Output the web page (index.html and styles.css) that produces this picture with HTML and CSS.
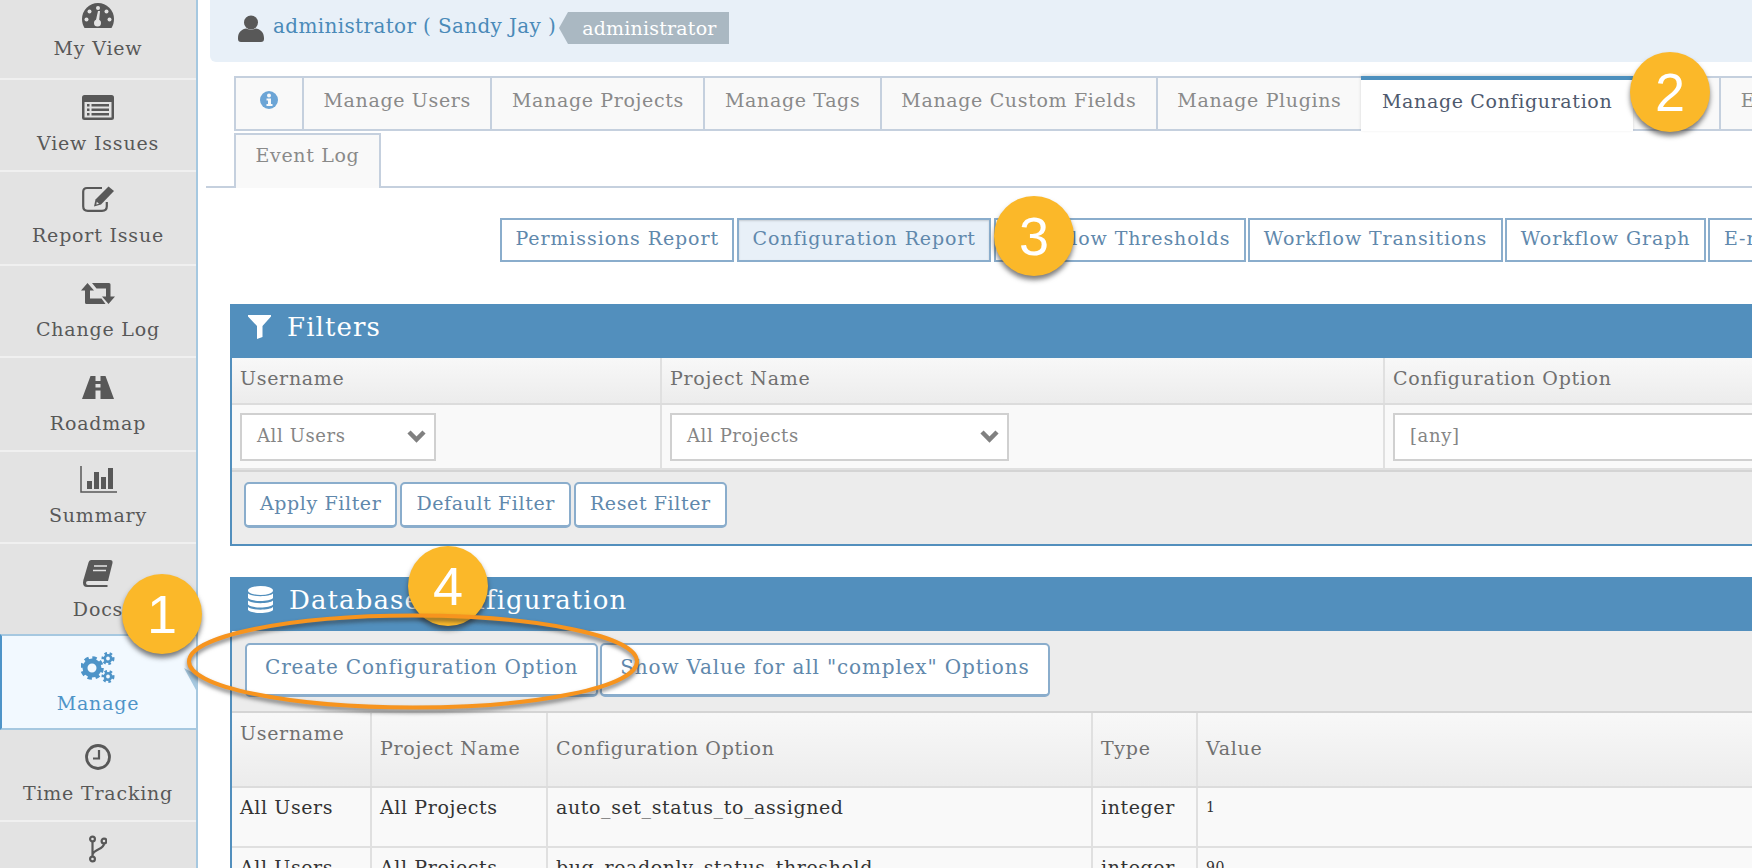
FILE: index.html
```html
<!DOCTYPE html>
<html lang="en">

<head>
    <meta charset="UTF-8" />
    <meta name="viewport" content="width=device-width, initial-scale=1.0" />
    <title>Configuration Report</title>

    <link rel="stylesheet" href="styles.css">
</head>

<body>
    <div class="page">
        <!-- SIDEBAR -->
        <nav class="sidebar">
            <a class="nav-item first">
                <span class="nav-icon">
                    <svg width="32" height="25" viewBox="0 0 32 25"><path fill="#585858" d="M16 0A16 16 0 0 0 0 16c0 3.500 1 6.500 2.500 9h27c1.500-2.500 2.500-5.500 2.500-9A16 16 0 0 0 16 0z"/><g fill="#e3e3e3"><circle cx="16" cy="5" r="2"/><circle cx="7.500" cy="8.500" r="2"/><circle cx="4.500" cy="16.500" r="2"/><circle cx="27.500" cy="16.500" r="2"/><circle cx="24.500" cy="8.500" r="2"/><circle cx="15.500" cy="20" r="3.500"/><path d="M13.500 19l2.500-11h2l-1 11z"/></g></svg>
                </span>
                <span class="nav-label">My View</span>
            </a>
            <a class="nav-item">
                <span class="nav-icon">
                    <svg width="32" height="25" viewBox="0 0 32 25"><rect width="32" height="25" rx="2.500" fill="#585858"/><rect x="2.500" y="7" width="27" height="15.500" fill="#e3e3e3"/><g fill="#585858"><rect x="5" y="9" width="2.500" height="2.500"/><rect x="5" y="13.500" width="2.500" height="2.500"/><rect x="5" y="18" width="2.500" height="2.500"/><rect x="9.500" y="9" width="17.500" height="2.500"/><rect x="9.500" y="13.500" width="17.500" height="2.500"/><rect x="9.500" y="18" width="17.500" height="2.500"/></g></svg>
                </span>
                <span class="nav-label">View Issues</span>
            </a>
            <a class="nav-item tall">
                <span class="nav-icon">
                    <svg width="32" height="26" viewBox="0 0 32 26"><path fill="none" stroke="#585858" stroke-width="2.200" d="M20 2H5Q1.200 2 1.200 5.800V20.200Q1.200 24.800 5.800 24.800H20Q24.800 24.800 24.800 20.200V16"/><path fill="#585858" d="M26.500 0.500L32 5 19 18.500 12 20.500 13.500 13.500z"/><path fill="#e3e3e3" d="M14.800 15.800l2.200 2-2.700.8z"/></svg>
                </span>
                <span class="nav-label">Report Issue</span>
            </a>
            <a class="nav-item">
                <span class="nav-icon">
                    <svg width="34" height="21" viewBox="0 0 34 21"><path fill="#585858" d="M6.500 0L13 7.500H9V15.500H20.500L24.500 21H5.500Q4 21 4 19.500V7.500H0zM11 0H28Q29.500 0 29.500 1.500V13.500H34L27.500 21 21 13.500H25V5.500H15.500z"/></svg>
                </span>
                <span class="nav-label">Change Log</span>
            </a>
            <a class="nav-item tall roomy">
                <span class="nav-icon">
                    <svg width="32" height="23" viewBox="0 0 32 23"><path fill="#585858" fill-rule="evenodd" d="M8.500 0H13.500V5H18.500V0H23.500L32 23H18.500V14.500H13.500V23H0zM13.500 8H18.500V11.500H13.500z"/></svg>
                </span>
                <span class="nav-label">Roadmap</span>
            </a>
            <a class="nav-item">
                <span class="nav-icon">
                    <svg width="37" height="27" viewBox="0 0 37 27"><path fill="none" stroke="#585858" stroke-width="1.500" d="M1 0V26H37"/><g fill="#585858"><rect x="7" y="15" width="5" height="8"/><rect x="14" y="6" width="5" height="17"/><rect x="21" y="11" width="5" height="12"/><rect x="28" y="2" width="5" height="21"/></g></svg>
                </span>
                <span class="nav-label">Summary</span>
            </a>
            <a class="nav-item roomy">
                <span class="nav-icon">
                    <svg width="30" height="27" viewBox="0 0 30 27"><path fill="#585858" d="M8 0H27Q30 0 29.500 3L25 21H5Q3 21 3 23t2 2H24.500V27H4Q0 27 0 22.500 0 20.500 1 18L5.500 2.500Q6 0 8 0z"/><path fill="none" stroke="#e3e3e3" stroke-width="1.600" d="M11 6H24M10 10.500H23"/></svg>
                </span>
                <span class="nav-label">Docs</span>
            </a>
            <a class="nav-item roomy active">
                <span class="nav-icon">
                    <svg width="34" height="31" viewBox="0 0 34 31"><g fill="none" stroke="#4e94c8"><circle cx="11" cy="16" r="7" stroke-width="5"/><circle cx="11" cy="16" r="9.800" stroke-width="4" stroke-dasharray="4.200 3.500"/><circle cx="27" cy="6.500" r="3.200" stroke-width="2.600"/><circle cx="27" cy="6.500" r="5.200" stroke-width="2.600" stroke-dasharray="2.500 2.600"/><circle cx="27" cy="24.500" r="3.200" stroke-width="2.600"/><circle cx="27" cy="24.500" r="5.200" stroke-width="2.600" stroke-dasharray="2.500 2.600"/></g></svg>
                </span>
                <span class="nav-label">Manage</span>
            </a>
            <a class="nav-item">
                <span class="nav-icon">
                    <svg width="28" height="26" viewBox="0 0 28 26"><circle cx="14" cy="13" r="11.500" fill="none" stroke="#585858" stroke-width="2.800"/><path fill="none" stroke="#585858" stroke-width="2.200" d="M15 6V14.500H9"/></svg>
                </span>
                <span class="nav-label">Time Tracking</span>
            </a>
            <a class="nav-item">
                <span class="nav-icon">
                    <svg width="18" height="28" viewBox="0 0 18 28"><g fill="none" stroke="#585858" stroke-width="2.200"><circle cx="3.500" cy="4" r="2.400"/><circle cx="3.500" cy="24" r="2.400"/><circle cx="15" cy="6" r="2.400"/><path d="M3.500 6.500V21.500M15 8.500C15 15 4 14 3.500 20"/></g></svg>
                </span>
            </a>
        </nav>

        <main class="main">
            <!-- USER BAR -->
            <div class="userbar">
                <svg class="user-icon" width="26" height="27" viewBox="0 0 26 27"><circle cx="13" cy="7.500" r="7" fill="#585858"/><path fill="#585858" d="M0 23C0 17 4 14 8.500 13.500 10 15 16 15 17.500 13.500 22 14 26 17 26 23V24Q26 27 23 27H3Q0 27 0 24z"/></svg>
                <span class="user-name">administrator ( Sandy Jay )</span>
                <span class="user-badge">administrator</span>
            </div>

            <!-- TABS -->
            <ul class="tabs">
                <li class="tab tab-info">
                    <svg width="18" height="18" viewBox="0 0 18 18"><circle cx="9" cy="9" r="9" fill="#6ca5d6"/><circle cx="9" cy="4.500" r="2" fill="#f9f9f9"/><path fill="#f9f9f9" d="M6.500 7.500H11V13H12.500V15H6.500V13H8V9.500H6.500z"/></svg>
                </li>
                <li class="tab">Manage Users</li>
                <li class="tab">Manage Projects</li>
                <li class="tab">Manage Tags</li>
                <li class="tab">Manage Custom Fields</li>
                <li class="tab">Manage Plugins</li>
                <li class="tab active">Manage Configuration</li>
                <li class="tab tab-hidden"></li>
                <li class="tab">E-mail</li>
                <li class="tab tab-low">Event Log</li>
            </ul>

            <!-- REPORT BUTTONS -->
            <div class="reports">
                <a class="report">Permissions Report</a>
                <a class="report current">Configuration Report</a>
                <a class="report">Workflow Thresholds</a>
                <a class="report">Workflow Transitions</a>
                <a class="report">Workflow Graph</a>
                <a class="report">E-mail Notifications</a>
            </div>

            <!-- FILTERS -->
            <section class="panel">
                <h2 class="panel-title">
                    <svg class="title-icon" width="23" height="24" viewBox="0 0 23 24"><path fill="#fff" d="M0 0H23V1.500L14.500 11V22L9 24V11L0 1.500z"/></svg>
                    Filters
                </h2>
                <table class="grid filters">
                    <thead>
                        <tr>
                            <th class="f-user">Username</th>
                            <th class="f-project">Project Name</th>
                            <th>Configuration Option</th>
                        </tr>
                    </thead>
                    <tbody>
                        <tr>
                            <td>
                                <div class="select s-user">All Users
                                    <svg width="19" height="14" viewBox="0 0 19 14"><path fill="none" stroke="#808080" stroke-width="4.500" d="M2 3L9.500 10.500 17 3"/></svg>
                                </div>
                            </td>
                            <td>
                                <div class="select s-project">All Projects
                                    <svg width="19" height="14" viewBox="0 0 19 14"><path fill="none" stroke="#808080" stroke-width="4.500" d="M2 3L9.500 10.500 17 3"/></svg>
                                </div>
                            </td>
                            <td>
                                <div class="select s-option">[any]</div>
                            </td>
                        </tr>
                    </tbody>
                </table>
                <div class="panel-foot">
                    <a class="btn">Apply Filter</a>
                    <a class="btn">Default Filter</a>
                    <a class="btn">Reset Filter</a>
                </div>
            </section>

            <!-- DATABASE CONFIGURATION -->
            <section class="panel panel-db">
                <h2 class="panel-title">
                    <svg class="title-icon" width="25" height="28" viewBox="0 0 25 28"><g fill="#fff"><ellipse cx="12.500" cy="4.500" rx="12.500" ry="4.500"/><path d="M0 7.500C3 11 22 11 25 7.500V12C22 16 3 16 0 12zM0 14.500C3 18 22 18 25 14.500V18.500C22 22.500 3 22.500 0 18.500zM0 21C3 24.500 22 24.500 25 21V24C22 28 3 28 0 24z"/></g></svg>
                    Database Configuration
                </h2>
                <div class="panel-bar">
                    <a class="btn btn-big">Create Configuration Option</a>
                    <a class="btn btn-big">Show Value for all "complex" Options</a>
                </div>
                <table class="grid configs">
                    <thead>
                        <tr>
                            <th class="c-user">Username</th>
                            <th class="c-project">Project Name</th>
                            <th class="c-option">Configuration Option</th>
                            <th class="c-type">Type</th>
                            <th>Value</th>
                        </tr>
                    </thead>
                    <tbody>
                        <tr>
                            <td>All Users</td>
                            <td>All Projects</td>
                            <td>auto_set_status_to_assigned</td>
                            <td>integer</td>
                            <td class="value">1</td>
                        </tr>
                        <tr>
                            <td>All Users</td>
                            <td>All Projects</td>
                            <td>bug_readonly_status_threshold</td>
                            <td>integer</td>
                            <td class="value">90</td>
                        </tr>
                    </tbody>
                </table>
            </section>
        </main>

        <!-- CALLOUTS -->
        <span class="manage-arrow"></span>
        <span class="callout c1">1</span>
        <span class="callout c2">2</span>
        <span class="callout c3">3</span>
        <span class="callout c4">4</span>
        <svg class="ring" width="470" height="110" viewBox="0 0 470 110"><ellipse cx="233" cy="52.500" rx="224" ry="46" fill="none" stroke="#f7941e" stroke-width="4"/></svg>
    </div>
</body>

</html>
```

FILE: styles.css
```css
* {
    box-sizing: border-box;
}

body {
    margin: 0;
    font-family: "DejaVu Serif", serif;
    font-size: 18px;
    letter-spacing: 0.6px;
    color: #333;
    background: #fff;
}

.page {
    position: relative;
    display: flex;
    width: 1752px;
    height: 868px;
    overflow: hidden;
}

/* SIDEBAR */
.sidebar {
    flex: none;
    width: 198px;
    display: flex;
    flex-direction: column;
    background: #e3e3e3;
    border-right: 2px solid #a6c8e0;
}

.nav-item {
    flex: none;
    height: 92px;
    padding-top: 12px;
    display: flex;
    flex-direction: column;
    align-items: center;
    border-bottom: 2px solid #f0f0f0;
    color: #585858;
}

.nav-item.first {
    height: 80px;
    padding-top: 0;
}

.nav-item.first .nav-label {
    margin-top: 7px;
}

.nav-item.tall {
    height: 94px;
}

.nav-item.roomy {
    padding-top: 14px;
}

.nav-item.active {
    height: 96px;
    margin-top: -2px;
    padding-top: 16px;
    padding-right: 2px;
    background: #f2f9ff;
    color: #4e94c8;
    border-top: 2px solid #a6c8e0;
    border-bottom: 2px solid #a6c8e0;
    border-left: 2px solid #4e94c8;
}

.nav-icon {
    height: 30px;
    display: flex;
    align-items: center;
    justify-content: center;
}

.nav-label {
    margin-top: 10px;
    line-height: 22px;
    font-size: 19px;
    letter-spacing: 0.8px;
    white-space: nowrap;
}

/* MAIN */
.main {
    flex: none;
    width: 1680px;
    display: flex;
    flex-direction: column;
}

.main > * {
    flex: none;
}

.userbar {
    height: 62px;
    margin-left: 12px;
    padding: 0 0 6px 28px;
    display: flex;
    align-items: center;
    background: #e8f0f8;
    border-bottom-left-radius: 6px;
}

.user-name {
    margin-left: 9px;
    margin-bottom: 4px;
    color: #4a8ab8;
    font-size: 20px;
    letter-spacing: 0.35px;
    white-space: nowrap;
}

.user-badge {
    position: relative;
    margin-left: 12px;
    height: 32px;
    padding: 0 12px 0 14px;
    display: flex;
    align-items: center;
    background: #aab8c2;
    color: #fff;
    font-size: 19px;
    letter-spacing: 0.2px;
}

.user-badge::before {
    content: "";
    position: absolute;
    left: -9px;
    top: 0;
    border-style: solid;
    border-width: 16px 9px 16px 0;
    border-color: transparent #aab8c2 transparent transparent;
}

/* TABS */
.tabs {
    list-style: none;
    margin: 14px 0 0 8px;
    padding: 0 0 0 28px;
    display: flex;
    flex-wrap: wrap;
    row-gap: 2px;
    border-bottom: 2px solid #c5d0de;
}

.tab {
    height: 55px;
    padding: 0 19.5px 8px;
    margin-right: -2px;
    display: flex;
    align-items: center;
    background: #f9f9f9;
    border: 2px solid #c5d0de;
    color: #8a8a8a;
    font-size: 19px;
    letter-spacing: 0.65px;
    white-space: nowrap;
}

.tab-info {
    width: 70px;
    justify-content: center;
    padding: 0 0 8px;
}

.tab-hidden {
    width: 90px;
}

.tab.active {
    position: relative;
    padding: 0 21px 8px;
    background: #fff;
    color: #4f5a6e;
    border-top: 4px solid #4c8fbd;
    border-bottom-color: #fff;
    border-left: 0;
    border-right: 0;
    box-shadow: 0 -1px 3px rgba(0, 0, 0, 0.15);
}

.tab-low {
    margin-bottom: -2px;
    padding-bottom: 14px;
    border-bottom: 0;
}

/* REPORT BUTTONS */
.reports {
    margin: 30px 0 0 302px;
    display: flex;
    gap: 2.5px;
}

.report {
    flex: none;
    height: 44px;
    padding: 0 13.5px 4px;
    display: flex;
    align-items: center;
    background: #fff;
    border: 2px solid #8aadcc;
    color: #6088ac;
    font-size: 19px;
    letter-spacing: 0.9px;
    white-space: nowrap;
}

.report.current {
    background: #e8f0f8;
    box-shadow: inset 0 1px 2px rgba(0, 0, 0, 0.15);
}

/* PANELS */
.panel {
    margin: 42px 0 0 32px;
    border-left: 2px solid #528fbd;
    border-bottom: 2px solid #528fbd;
}

.panel-db {
    margin-top: 31px;
    border-bottom: 0;
}

.panel-title {
    height: 54px;
    margin: 0 0 0 -2px;
    padding: 0 0 8px 18px;
    display: flex;
    align-items: center;
    gap: 16px;
    background: #528fbd;
    color: #fff;
    font-size: 26px;
    font-weight: normal;
    letter-spacing: 1.1px;
}

.title-icon {
    flex: none;
}

.grid {
    width: 100%;
    border-collapse: collapse;
    table-layout: fixed;
}

.grid th {
    padding: 0 8px;
    text-align: left;
    font-weight: normal;
    color: #707070;
    font-size: 19px;
    letter-spacing: 0.7px;
    background: linear-gradient(#f8f8f8, #ececec);
    border-right: 2px solid #e0e0e0;
    border-bottom: 2px solid #dcdcdc;
}

.grid td {
    padding: 0 8px;
    background: #f9f9f9;
    border-right: 2px solid #e0e0e0;
    border-bottom: 2px solid #e0e0e0;
    font-size: 19px;
    white-space: nowrap;
}

.filters thead tr {
    height: 46px;
}

.filters th {
    padding-bottom: 6px;
}

.filters tbody tr {
    height: 65px;
}

.f-user {
    width: 429px;
}

.f-project {
    width: 723px;
}

.select {
    height: 48px;
    padding: 0 8px 2px 15px;
    display: flex;
    align-items: center;
    justify-content: space-between;
    background: #fff;
    border: 2px solid #d0d0d0;
    color: #858585;
    font-size: 18px;
}

.s-user {
    width: 196px;
}

.s-project {
    width: 339px;
}

.panel-foot {
    height: 74px;
    padding: 10px 0 0 12px;
    display: flex;
    gap: 3px;
    align-items: flex-start;
    background: #ececec;
    border-top: 2px solid #d4d4d4;
}

.btn {
    flex: none;
    height: 46px;
    padding: 0 14px 4px;
    display: flex;
    align-items: center;
    background: #fff;
    border: 2px solid #8aadcc;
    border-bottom-width: 3px;
    border-radius: 5px;
    color: #6088ac;
    font-size: 19px;
    white-space: nowrap;
}

.panel-bar {
    height: 82px;
    padding: 12px 0 0 13px;
    display: flex;
    gap: 2px;
    align-items: flex-start;
    background: #ececec;
    border-bottom: 2px solid #d4d4d4;
}

.btn-big {
    height: 54px;
    padding: 0 18px 6px;
    font-size: 20px;
    letter-spacing: 0.85px;
}

.configs thead tr {
    height: 74px;
}

.configs tbody tr {
    height: 60px;
}

.configs th {
    padding-bottom: 4px;
}

.configs td {
    vertical-align: top;
    padding-top: 8px;
}

.configs th.c-user {
    width: 139px;
    vertical-align: top;
    padding-top: 9px;
}

.c-project {
    width: 176px;
}

.c-option {
    width: 545px;
}

.c-type {
    width: 105px;
}

.configs td.value {
    padding-top: 11px;
    font-size: 14px;
}

/* CALLOUTS */
.callout {
    position: absolute;
    width: 80px;
    height: 80px;
    display: flex;
    align-items: center;
    justify-content: center;
    border-radius: 50%;
    background: #fbb829;
    color: #fff;
    font-family: "Liberation Sans", sans-serif;
    font-size: 54px;
    letter-spacing: 0;
    box-shadow: 0 4px 5px rgba(40, 40, 40, 0.6);
}

.c1 {
    left: 122px;
    top: 574px;
}

.c2 {
    left: 1630px;
    top: 52px;
}

.c3 {
    left: 994px;
    top: 196px;
}

.c4 {
    left: 408px;
    top: 546px;
}

.ring {
    position: absolute;
    left: 180px;
    top: 609px;
    filter: drop-shadow(0 3px 2px rgba(40, 40, 40, 0.6));
}

.manage-arrow {
    position: absolute;
    left: 184px;
    top: 668px;
    width: 12px;
    height: 22px;
    background: #a6c8e0;
    clip-path: polygon(0 0, 100% 100%, 100% 30%);
}
```
